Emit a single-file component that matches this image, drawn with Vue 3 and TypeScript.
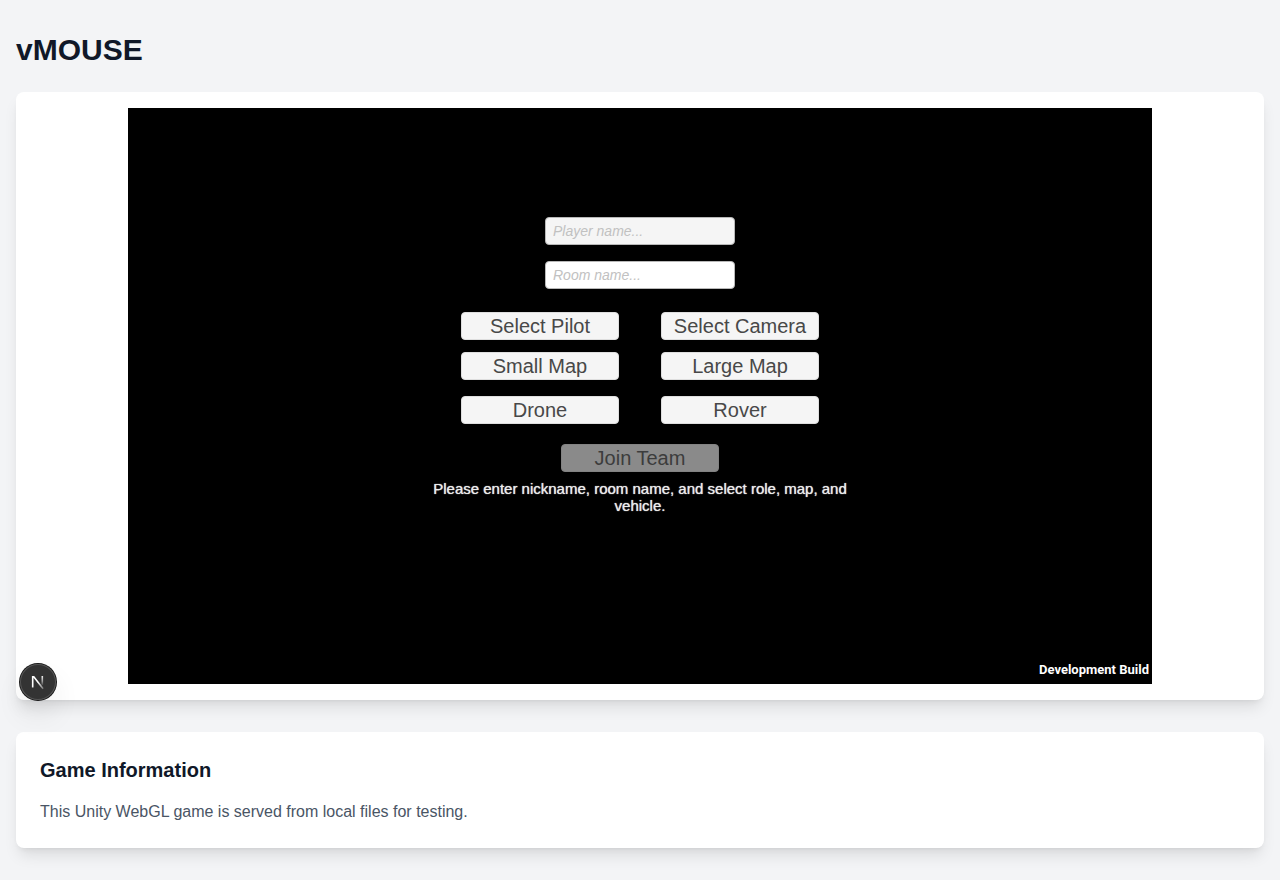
<script setup lang="ts">
import { ref } from 'vue'

const playerName = ref('')
const roomName = ref('')

const choices: string[][] = [
  ['Select Pilot', 'Select Camera'],
  ['Small Map', 'Large Map'],
  ['Drone', 'Rover'],
]
</script>

<template>
  <main class="page">
    <h1 class="title">vMOUSE</h1>

    <section class="card game-card">
      <div class="game">
        <form class="lobby" @submit.prevent>
          <input v-model="playerName" class="field hovered" type="text" placeholder="Player name..." aria-label="Player name" />
          <input v-model="roomName" class="field" type="text" placeholder="Room name..." aria-label="Room name" />
          <div class="choices">
            <div v-for="row in choices" :key="row[0]" class="choice-row">
              <button v-for="label in row" :key="label" class="choice" type="button">{{ label }}</button>
            </div>
          </div>
          <button class="choice join" type="submit" disabled>Join Team</button>
          <p class="message">Please enter nickname, room name, and select role, map, and vehicle.</p>
        </form>
        <span class="build">Development Build</span>
      </div>

      <button class="dev-badge" type="button" aria-label="Open developer tools">
        <svg width="40" height="40" viewBox="0 0 40 40" fill="none" aria-hidden="true">
          <defs>
            <linearGradient id="stem" x1="0" y1="13" x2="0" y2="24" gradientUnits="userSpaceOnUse">
              <stop stop-color="#fff" />
              <stop offset="0.6" stop-color="#fff" stop-opacity="0.5" />
              <stop offset="1" stop-color="#fff" stop-opacity="0" />
            </linearGradient>
            <linearGradient id="diagonal" x1="20" y1="20" x2="26" y2="28" gradientUnits="userSpaceOnUse">
              <stop stop-color="#fff" />
              <stop offset="1" stop-color="#fff" stop-opacity="0.2" />
            </linearGradient>
          </defs>
          <path d="M14.7 25.5V14.7h1.1l9.3 12" stroke="url(#diagonal)" stroke-width="1.6" />
          <path d="M24.3 14V23" stroke="url(#stem)" stroke-width="1.6" />
        </svg>
      </button>
    </section>

    <section class="card info">
      <h2 class="info-title">Game Information</h2>
      <p class="info-text">This Unity WebGL game is served from local files for testing.</p>
    </section>
  </main>
</template>

<style>
body {
  background: #f3f4f6;
}
</style>

<style scoped>
.page {
  display: flex;
  flex-direction: column;
  padding: 32px 16px;
  color: #101828;
  font: 16px/24px "Liberation Sans", Arial, sans-serif;
}

.title {
  margin: 0 0 24px;
  font-size: 30px;
  line-height: 36px;
}

.card {
  border-radius: 8px;
  background: #fff;
  box-shadow: 0 10px 15px -3px rgb(0 0 0 / 10%), 0 4px 6px -4px rgb(0 0 0 / 10%);
}

.game-card {
  position: relative;
  margin-bottom: 32px;
  padding: 16px;
}

.game {
  position: relative;
  box-sizing: border-box;
  max-width: 1024px;
  aspect-ratio: 16 / 9;
  margin: 0 auto;
  padding-top: 109px;
  background: #000;
}

.lobby {
  display: flex;
  flex-direction: column;
  align-items: center;
}

.field,
.choice {
  box-sizing: border-box;
  height: 28px;
  border: 1px solid #dedede;
  border-radius: 4px;
  font-family: inherit;
}

.field {
  width: 190px;
  margin: 0 0 16px;
  padding: 0 7px;
  border-color: #b8b8b8;
  background: #fff;
  color: #323232;
  font-size: 14px;
}

.field.hovered {
  background: #f5f5f5;
}

.field::placeholder {
  color: #c1c1c1;
  font-style: italic;
  opacity: 1;
}

.choices {
  display: flex;
  flex-direction: column;
  gap: 12px;
  margin-top: 7px;
}

.choice-row {
  display: flex;
  gap: 42px;
}

.choice-row:last-child {
  margin-top: 4px;
}

.choice {
  width: 158px;
  padding: 0;
  background: #f5f5f5;
  color: #484848;
  font-size: 20px;
  line-height: 26px;
}

.join {
  margin-top: 20px;
  border-color: #828282;
  background: #8a8a8a;
  color: #3c3c3c;
}

.message {
  max-width: 424px;
  margin: 8px 0 0;
  color: #ececec;
  font-size: 15px;
  line-height: 17px;
  text-align: center;
  text-shadow: 0 0 1px #ececec;
}

.build {
  position: absolute;
  right: 3px;
  bottom: 6px;
  color: #fff;
  font: bold 13px/16px Roboto, sans-serif;
}

.dev-badge {
  position: absolute;
  bottom: 0;
  left: 4px;
  display: flex;
  align-items: center;
  justify-content: center;
  width: 36px;
  height: 36px;
  padding: 0;
  border: 0;
  border-radius: 50%;
  background: #333;
  box-shadow: 0 0 0 1px #171717, inset 0 0 0 1px #555, 0 16px 32px -8px rgb(0 0 0 / 24%);
}

.dev-badge svg {
  flex: none;
}

.info {
  padding: 24px;
}

.info-title {
  margin: 0 0 16px;
  font-size: 20px;
  line-height: 28px;
}

.info-text {
  margin: 0;
  color: #4a5565;
}
</style>
